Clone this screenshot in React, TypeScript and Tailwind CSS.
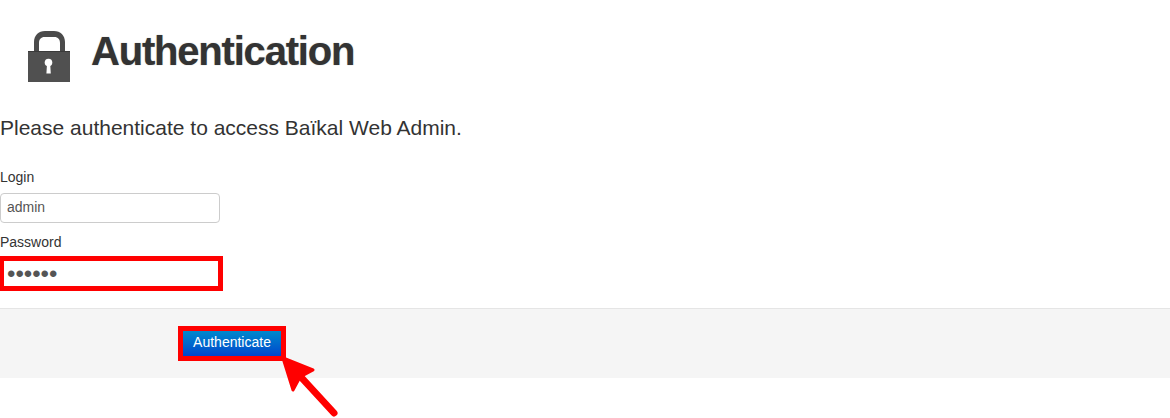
const font = { fontFamily: '"Liberation Sans", Arial, sans-serif' }

function LockIcon() {
  return (
    <svg width="42" height="51" viewBox="0 0 42 51" className="shrink-0">
      <path
        d="M6 21V11C6 4.500 10.500 0 17 0h9c6.500 0 11 4.500 11 11v10h-5V12C32 8.500 30 6 26.500 6h-10C13 6 11 8.500 11 12v9z"
        fill="#4b4b4b"
      />
      <rect x="0" y="20" width="42" height="31" fill="#505050" />
      <rect x="0" y="20" width="42" height="1" fill="#3a3a3a" />
      <circle cx="20.500" cy="31.500" r="3.800" fill="#ffffff" />
      <path d="M19 33h3.200l.6 9.500h-4.400z" fill="#ffffff" />
    </svg>
  )
}

export default function App() {
  return (
    <div className="relative h-[418px] w-[1170px] overflow-hidden bg-white text-[#333333]" style={font}>
      {/* Header */}
      <div className="flex h-[82px] items-start gap-[21px] pl-[28px] pt-[31px]">
        <LockIcon />
        <h1 className="mt-[-3px] text-[40px] font-bold leading-[46px] tracking-[-1.2px] [text-shadow:0_0_1px_rgba(51,51,51,0.5)]">
          Authentication
        </h1>
      </div>

      <p className="mt-[31px] text-[21px] font-normal leading-[30px]">Please authenticate to access Baïkal Web Admin.</p>

      {/* Form */}
      <form className="mt-[24px]">
        <label className="block text-[14px] leading-[20px]">Login</label>
        <input
          readOnly
          value="admin"
          className="mt-[6px] block h-[30px] w-[220px] rounded-[4px] border border-[#cccccc] bg-white px-[6px] pb-[2px] text-[14px] text-[#555555] outline-none"
        />
        <label className="mt-[9px] block text-[14px] leading-[20px]">Password</label>
        <input
          readOnly
          type="password"
          value="secret"
          className="ml-[-1px] mt-[4px] block h-[35px] w-[224px] border-[5px] border-[#ff0000] bg-white px-[3px] text-[24px] text-[#555555] outline-none"
        />

        {/* Actions */}
        <div className="mt-[17px] h-[70px] border-t border-[#e5e5e5] bg-[#f5f5f5] pl-[178px] pt-[17px]">
          <button
            type="button"
            className="h-[35px] w-[108px] border-[5px] border-[#ff0000] bg-gradient-to-b from-[#0088cc] to-[#0044cc] pb-[4px] text-[14px] leading-[20px] text-white"
          >
            Authenticate
          </button>
        </div>
      </form>

      {/* Arrow annotation */}
      <svg width="70" height="70" viewBox="0 0 70 70" className="absolute left-[278px] top-[350px]">
        <path d="M56 63 L22 26" stroke="#ff0000" strokeWidth="7" strokeLinecap="round" fill="none" />
        <path d="M5 8 L35 20 L22 27 L15 40 Z" fill="#ff0000" stroke="#ff0000" strokeWidth="3" strokeLinejoin="round" />
      </svg>
    </div>
  )
}
